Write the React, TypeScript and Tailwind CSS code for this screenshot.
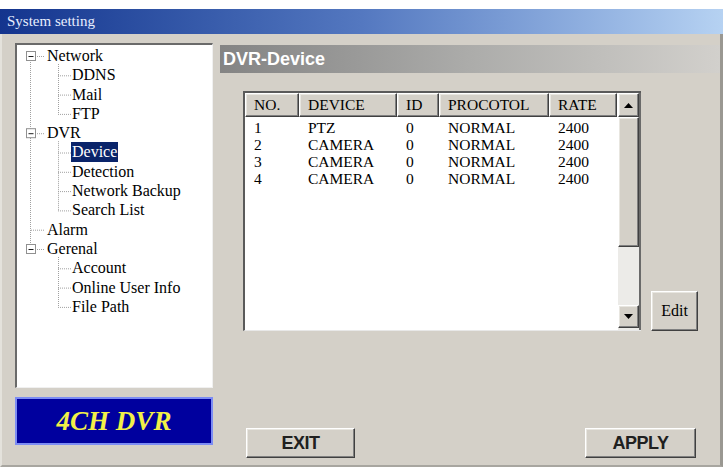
import React from 'react';

type Node = { label: string; level: 0 | 1; expand?: boolean; selected?: boolean };

const tree: Node[] = [
  { label: 'Network', level: 0, expand: true },
  { label: 'DDNS', level: 1 },
  { label: 'Mail', level: 1 },
  { label: 'FTP', level: 1 },
  { label: 'DVR', level: 0, expand: true },
  { label: 'Device', level: 1, selected: true },
  { label: 'Detection', level: 1 },
  { label: 'Network Backup', level: 1 },
  { label: 'Search List', level: 1 },
  { label: 'Alarm', level: 0 },
  { label: 'Gerenal', level: 0, expand: true },
  { label: 'Account', level: 1 },
  { label: 'Online User Info', level: 1 },
  { label: 'File Path', level: 1 },
];

const ROW = 19.3;
const TOP = 11;

const rows = [
  ['1', 'PTZ', '0', 'NORMAL', '2400'],
  ['2', 'CAMERA', '0', 'NORMAL', '2400'],
  ['3', 'CAMERA', '0', 'NORMAL', '2400'],
  ['4', 'CAMERA', '0', 'NORMAL', '2400'],
];

const cols = ['NO.', 'DEVICE', 'ID', 'PROCOTOL', 'RATE'];
const widths = ['w-[54px]', 'w-[98px]', 'w-[42px]', 'w-[110px]', 'w-[68px]'];

const raised =
  'border border-t-white border-l-white border-r-[#404040] border-b-[#404040] shadow-[inset_-1px_-1px_#808080,inset_1px_1px_#e8e6e0] bg-[#d4d0c8]';

function TreeLines() {
  const cy = (i: number) => TOP + i * ROW;
  const dot = '#a0a0a0';
  const parents = [0, 4, 10];
  const lastChild: Record<number, number> = { 0: 3, 4: 8, 10: 13 };
  return (
    <svg className="absolute inset-0 pointer-events-none" width="196" height="343">
      {/* top level vertical */}
      <line x1="13.5" y1={cy(0)} x2="13.5" y2={cy(10)} stroke={dot} strokeDasharray="1 1" />
      {tree.map((n, i) =>
        n.level === 0 ? (
          <line key={i} x1={n.expand ? 18 : 14} y1={cy(i) + 0.5} x2="28" y2={cy(i) + 0.5} stroke={dot} strokeDasharray="1 1" />
        ) : (
          <line key={i} x1="41" y1={cy(i) + 0.5} x2="54" y2={cy(i) + 0.5} stroke={dot} strokeDasharray="1 1" />
        )
      )}
      {parents.map((p) => (
        <line key={'v' + p} x1="41.5" y1={cy(p) + 8} x2="41.5" y2={cy(lastChild[p])} stroke={dot} strokeDasharray="1 1" />
      ))}
      {parents.map((p) => (
        <g key={'b' + p}>
          <rect x="9.5" y={cy(p) - 4.5} width="9" height="9" fill="white" stroke="#909090" />
          <line x1="11.5" y1={cy(p) + 0.5} x2="16.5" y2={cy(p) + 0.5} stroke="#202020" />
        </g>
      ))}
    </svg>
  );
}

export default function App() {
  return (
    <div className="w-[723px] h-[467px] bg-white overflow-hidden font-['Liberation_Serif',serif] text-black">
      <div className="h-[9px] bg-white" />
      {/* title bar */}
      <div className="h-[25px] bg-linear-to-r from-[#14348e] via-[#5478c0] to-[#b6d2f2] flex items-center pl-[7px]">
        <span className="text-[15px] text-[#e8eeff] leading-none">System setting</span>
      </div>

      <div className="h-[433px] bg-[#d4d0c8] flex border-r-[3px] border-r-[#9a9892] border-b-2 border-b-[#a8a6a0] border-l-2 border-l-[#e4e2dc]">
        {/* left column */}
        <div className="pl-[13px] pt-[9px] w-[211px] flex flex-col">
          <div className="relative h-[345px] bg-white border-t-2 border-l-2 border-t-[#6a6a6a] border-l-[#6a6a6a] border-r border-b border-r-[#f0f0f0] border-b-[#f0f0f0]">
            <TreeLines />
            <div className="relative flex flex-col pt-[1.35px]">
              {tree.map((n, i) => (
                <div
                  key={i}
                  className={`h-[19.3px] flex items-center text-[16px] leading-none ${n.level === 0 ? 'pl-[29px]' : 'pl-[54px]'}`}
                >
                  <span className={n.selected ? 'bg-[#0a246a] text-white px-[1px] py-[2px]' : 'px-[1px]'}>{n.label}</span>
                </div>
              ))}
            </div>
          </div>
          <div className="mt-[9px] h-[48px] bg-[#00009e] border-2 border-[#7c8cf4] flex items-center justify-center">
            <span className="text-[27px] font-bold italic text-[#f2f048] leading-none">4CH DVR</span>
          </div>
        </div>

        {/* right column */}
        <div className="flex-1 pl-[7px] pt-[11px] flex flex-col">
          <div className="h-[28px] bg-linear-to-r from-[#848484] via-[#acacaa] to-[#d2d0cc] flex items-center pl-[3px]">
            <span className="font-['Liberation_Sans',sans-serif] font-bold text-[18px] text-white leading-none">DVR-Device</span>
          </div>

          <div className="mt-[18px] pl-[23px] flex items-end">
            <div className="w-[398px] h-[240px] bg-white flex border-t-2 border-l-2 border-t-[#5a5a5a] border-l-[#5a5a5a] border-b border-b-[#e8e8e8]">
              <div className="flex-1 flex flex-col">
                <div className="flex h-[24px]">
                  {cols.map((c, i) => (
                    <div key={c} className={`${widths[i]} ${raised} flex items-center pl-[8px] text-[15.5px] leading-none`}>
                      {c}
                    </div>
                  ))}
                </div>
                <div className="pt-[2px]">
                  {rows.map((r, ri) => (
                    <div key={ri} className="flex h-[17px] items-center text-[15.5px] leading-none">
                      {r.map((v, i) => (
                        <div key={i} className={`${widths[i]} pl-[9px]`}>
                          {v}
                        </div>
                      ))}
                    </div>
                  ))}
                </div>
              </div>
              {/* scrollbar */}
              <div className="w-[23px] flex flex-col bg-[#ecebe8] border-r-2 border-r-[#6a6a6a]">
                <div className={`h-[24px] ${raised} flex items-center justify-center`}>
                  <svg width="9" height="5" viewBox="0 0 9 5">
                    <path d="M4.5 0 L9 5 L0 5 Z" fill="#000" />
                  </svg>
                </div>
                <div className={`h-[130px] ${raised}`} />
                <div className="flex-1" />
                <div className={`h-[23px] ${raised} flex items-center justify-center mb-[2px]`}>
                  <svg width="9" height="5" viewBox="0 0 9 5">
                    <path d="M0 0 L9 0 L4.5 5 Z" fill="#000" />
                  </svg>
                </div>
              </div>
            </div>
            <button className={`ml-[10px] w-[47px] h-[40px] ${raised} text-[16px] flex items-center justify-center`}>
              Edit
            </button>
          </div>

          <div className="mt-[97px] flex pl-[26px] pr-[24px]">
            <button className={`w-[109px] h-[30px] ${raised} font-['Liberation_Sans',sans-serif] font-bold text-[18px] tracking-[-0.5px] text-[#202020] flex items-center justify-center`}>
              EXIT
            </button>
            <button className={`ml-auto w-[111px] h-[30px] ${raised} font-['Liberation_Sans',sans-serif] font-bold text-[18px] tracking-[-0.5px] text-[#202020] flex items-center justify-center`}>
              APPLY
            </button>
          </div>
        </div>
      </div>
    </div>
  );
}
